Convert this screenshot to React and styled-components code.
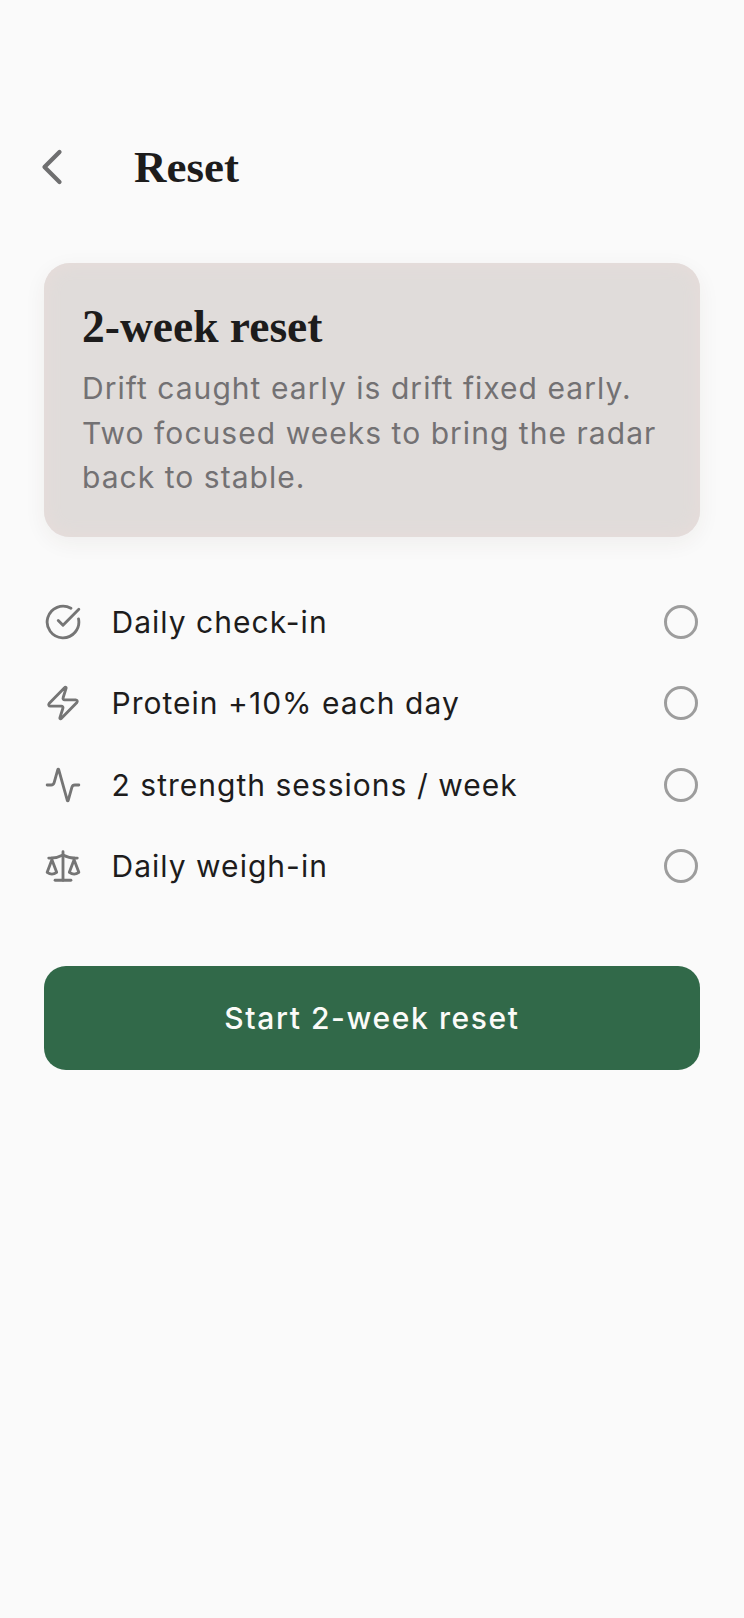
import React from "react";
import styled, { createGlobalStyle } from "styled-components";
import { ChevronLeft, CircleCheckBig, Zap, Activity, Scale } from "lucide-react";

const Global = createGlobalStyle`
  html, body {
    margin: 0;
    background: #fafafa;
  }
`

const Page = styled.main`
  width: 744px;
  height: 1618px;
  box-sizing: border-box;
  padding: 136px 44px 0;
  font-family: Inter, "Liberation Sans", sans-serif;
  color: #1d1c1c;
  background: #fafafa;
`

const Header = styled.header`
  display: flex;
  align-items: center;
  height: 62px;
  margin-left: -22.5px;
`

const BackButton = styled.button`
  display: flex;
  width: 60px;
  padding: 0;
  margin-right: 52.5px;
  border: 0;
  background: none;
  color: #6f6f70;
`

const Title = styled.h1`
  margin: 0;
  font-family: "Liberation Serif", serif;
  font-size: 45px;
  font-weight: 700;
`

const Card = styled.section`
  height: 274px;
  box-sizing: border-box;
  margin-top: 65px;
  padding: 42px 38px 0;
  border-radius: 26px;
  background: #e0dcda;
  box-shadow: inset 0 0 16px 2px #e7dcda, 0 6px 22px rgba(60, 45, 40, 0.06);
`

const CardTitle = styled.h2`
  margin: 0 0 17px;
  font-family: "Liberation Serif", serif;
  font-size: 45.5px;
  line-height: 44px;
  font-weight: 700;
`

const CardText = styled.p`
  margin: 0;
  font-size: 30px;
  line-height: 44.5px;
  letter-spacing: 1.04px;
  color: #737173;
`

const List = styled.ul`
  list-style: none;
  margin: 44px 0 0;
  padding: 0;
`

const Row = styled.li`
  display: flex;
  align-items: center;
  height: 81.5px;
  font-size: 30px;
  letter-spacing: 1.02px;
`

const IconSlot = styled.span`
  display: flex;
  width: 67.5px;
  color: #757575;
`

const Label = styled.span`
  flex: 1;
`

const Radio = styled.span`
  width: 34px;
  height: 34px;
  box-sizing: border-box;
  margin-right: 2px;
  border: 3px solid #9d9d9d;
  border-radius: 50%;
`

const StartButton = styled.button`
  display: block;
  width: 100%;
  height: 104px;
  margin-top: 59px;
  border: 0;
  border-radius: 22px;
  background: #316949;
  color: #fbfbf8;
  font-family: Inter, "Liberation Sans", sans-serif;
  font-size: 30px;
  font-weight: 500;
  letter-spacing: 1.6px;
`

const tarefas = [
  { icone: CircleCheckBig, texto: "Daily check-in" },
  { icone: Zap, texto: "Protein +10% each day" },
  { icone: Activity, texto: "2 strength sessions / week" },
  { icone: Scale, texto: "Daily weigh-in" },
]

function App() {
  return (
    <Page>
      <Global />
      <Header>
        <BackButton aria-label="Back">
          <ChevronLeft size={60} strokeWidth={1.7} />
        </BackButton>
        <Title>Reset</Title>
      </Header>

      <Card>
        <CardTitle>2-week reset</CardTitle>
        <CardText>
          Drift caught early is drift fixed early.
          <br />
          Two focused weeks to bring the radar
          <br />
          back to stable.
        </CardText>
      </Card>

      <List>
        {tarefas.map(({ icone: Icone, texto }) => (
          <Row key={texto}>
            <IconSlot>
              <Icone size={38} strokeWidth={1.8} />
            </IconSlot>
            <Label>{texto}</Label>
            <Radio />
          </Row>
        ))}
      </List>

      <StartButton>Start 2-week reset</StartButton>
    </Page>
  );
}

export default App;
